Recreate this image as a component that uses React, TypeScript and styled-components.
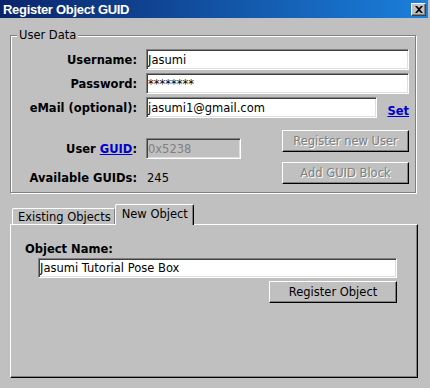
import React from "react";
import styled, { createGlobalStyle } from "styled-components";

const GlobalStyle = createGlobalStyle`
  html, body {
    margin: 0;
    padding: 0;
    background: #c0c0c0;
  }

  body {
    font-family: "DejaVu Sans", Verdana, sans-serif;
    font-size: 11.5px;
    color: #000;
  }
`;

const Window = styled.div`
  width: 430px;
  height: 388px;
  box-sizing: border-box;
  display: flex;
  flex-direction: column;
  background: #c0c0c0;
  overflow: hidden;
`;

const TitleBar = styled.div`
  flex: none;
  height: 18px;
  margin-right: 2px;
  display: flex;
  align-items: center;
  justify-content: space-between;
  padding: 0 2px 0 3px;
  background: linear-gradient(to right, #0a246a, #1a80dc);
  color: #fff;
  font: bold 13px "Liberation Sans", Arial, sans-serif;
  letter-spacing: -0.3px;
`;

const CloseButton = styled.button`
  width: 15px;
  height: 13px;
  padding: 0;
  display: flex;
  align-items: center;
  justify-content: center;
  background: #c0c0c0;
  border: 1px solid;
  border-color: #fff #404040 #404040 #fff;
  box-shadow: inset -1px -1px #808080;
`;

const Content = styled.div`
  flex: 1;
  display: flex;
  flex-direction: column;
  padding: 17px 0 0 10px;
`;

const GroupBox = styled.div`
  position: relative;
  width: 406px;
  box-sizing: border-box;
  padding: 13px 6px 7px 0;
  border: 1px solid #808080;
  box-shadow: 1px 1px 0 #fff, inset 1px 1px 0 #fff;
`;

const GroupLegend = styled.span`
  position: absolute;
  top: -8px;
  left: 6px;
  padding: 0 2px;
  line-height: 14px;
  background: #c0c0c0;
`;

const FieldGrid = styled.div<{ $gap: number }>`
  display: grid;
  grid-template-columns: 126px 1fr;
  column-gap: 9px;
  row-gap: ${(p) => p.$gap}px;
  align-items: center;
`;

const Label = styled.label`
  text-align: right;
  font-weight: bold;
  line-height: 14px;
  white-space: nowrap;
`;

const LinkText = styled.a`
  color: #0000cc;
  font-weight: bold;
  text-decoration: underline;
  cursor: pointer;
`;

const TextInput = styled.input<{ $width?: number; $height?: number }>`
  width: ${(p) => (p.$width ? `${p.$width}px` : "100%")};
  height: ${(p) => p.$height ?? 21}px;
  box-sizing: border-box;
  margin: 0;
  padding: 0 1px;
  border: 1px solid;
  border-color: #808080 #fff #fff #808080;
  box-shadow: inset 1px 1px #404040, inset -1px -1px #dfdfdf;
  background: #fff;
  color: #000;
  font-family: "DejaVu Sans", Verdana, sans-serif;
  font-size: 11.5px;
  outline: none;

  &:disabled {
    background: #c0c0c0;
    color: #808080;
  }
`;

const EmailCell = styled.div`
  display: flex;
  align-items: flex-end;
  justify-content: space-between;
  line-height: 14px;
`;

const LowerRow = styled.div`
  display: flex;
  justify-content: space-between;
  align-items: flex-start;
  margin-top: 12px;
`;

const LowerFields = styled(FieldGrid)`
  padding-top: 8px;
`;

const Value = styled.span`
  padding-left: 1px;
  line-height: 14px;
`;

const ButtonStack = styled.div`
  display: flex;
  flex-direction: column;
  gap: 10px;
`;

const Button = styled.button<{ $width: number }>`
  width: ${(p) => p.$width}px;
  height: 22px;
  box-sizing: border-box;
  padding: 0;
  border: 1px solid;
  border-color: #fff #000 #000 #fff;
  box-shadow: inset -1px -1px #808080;
  background: #c0c0c0;
  color: #000;
  font-family: "DejaVu Sans", Verdana, sans-serif;
  font-size: 11.5px;

  &:disabled {
    color: #808080;
    text-shadow: 1px 1px 0 #fff;
  }
`;

const TabStrip = styled.div`
  display: flex;
  align-items: flex-end;
  margin-top: 11px;
  padding-left: 2px;
`;

const Tab = styled.div<{ $active?: boolean }>`
  position: relative;
  box-sizing: border-box;
  height: ${(p) => (p.$active ? 21 : 16)}px;
  margin-bottom: ${(p) => (p.$active ? -1 : 0)}px;
  padding: ${(p) => (p.$active ? "2px 5px 0 6px" : "1px 3px 0 5px")};
  border-top: 1px solid #fff;
  border-left: 1px solid #fff;
  border-right: 1px solid ${(p) => (p.$active ? "#000" : "#808080")};
  border-radius: 2px 2px 0 0;
  box-shadow: ${(p) => (p.$active ? "inset -1px 0 #808080" : "none")};
  background: #c0c0c0;
  line-height: 14px;
  white-space: nowrap;
  z-index: ${(p) => (p.$active ? 1 : 0)};
`;

const TabPanel = styled.div`
  width: 408px;
  height: 154px;
  box-sizing: border-box;
  padding: 17px 0 0 14px;
  border: 1px solid;
  border-color: #fff #000 #000 #fff;
  box-shadow: inset -1px -1px #808080;
`;

const PanelLabel = styled.div`
  font-weight: bold;
  line-height: 14px;
`;

const PanelFields = styled.div`
  width: 359px;
  margin: 2px 0 0 13px;
  display: flex;
  flex-direction: column;
  align-items: flex-end;
  gap: 3px;
`;

function CloseGlyph() {
  return (
    <svg width="8" height="7" viewBox="0 0 8 7">
      <path d="M0 0h2l2 2 2-2h2L5 3.5 8 7H6L4 5 2 7H0l3-3.5z" fill="#000" />
    </svg>
  );
}

export default function App() {
  return (
    <>
      <GlobalStyle />
      <Window>
        <TitleBar>
          <span>Register Object GUID</span>
          <CloseButton aria-label="Close">
            <CloseGlyph />
          </CloseButton>
        </TitleBar>

        <Content>
          <GroupBox>
            <GroupLegend>User Data</GroupLegend>

            <FieldGrid $gap={3}>
              <Label>Username:</Label>
              <TextInput defaultValue="Jasumi" />
              <Label>Password:</Label>
              <TextInput defaultValue="********" />
              <Label>eMail (optional):</Label>
              <EmailCell>
                <TextInput $width={231} defaultValue="jasumi1@gmail.com" />
                <LinkText>Set</LinkText>
              </EmailCell>
            </FieldGrid>

            <LowerRow>
              <LowerFields $gap={12}>
                <Label>
                  User <LinkText>GUID</LinkText>:
                </Label>
                <TextInput $width={95} disabled defaultValue="0x5238" />
                <Label>Available GUIDs:</Label>
                <Value>245</Value>
              </LowerFields>

              <ButtonStack>
                <Button $width={127} disabled>
                  Register new User
                </Button>
                <Button $width={127} disabled>
                  Add GUID Block
                </Button>
              </ButtonStack>
            </LowerRow>
          </GroupBox>

          <TabStrip>
            <Tab>Existing Objects</Tab>
            <Tab $active>New Object</Tab>
          </TabStrip>

          <TabPanel>
            <PanelLabel>Object Name:</PanelLabel>
            <PanelFields>
              <TextInput $height={20} defaultValue="Jasumi Tutorial Pose Box" />
              <Button $width={128}>Register Object</Button>
            </PanelFields>
          </TabPanel>
        </Content>
      </Window>
    </>
  );
}
